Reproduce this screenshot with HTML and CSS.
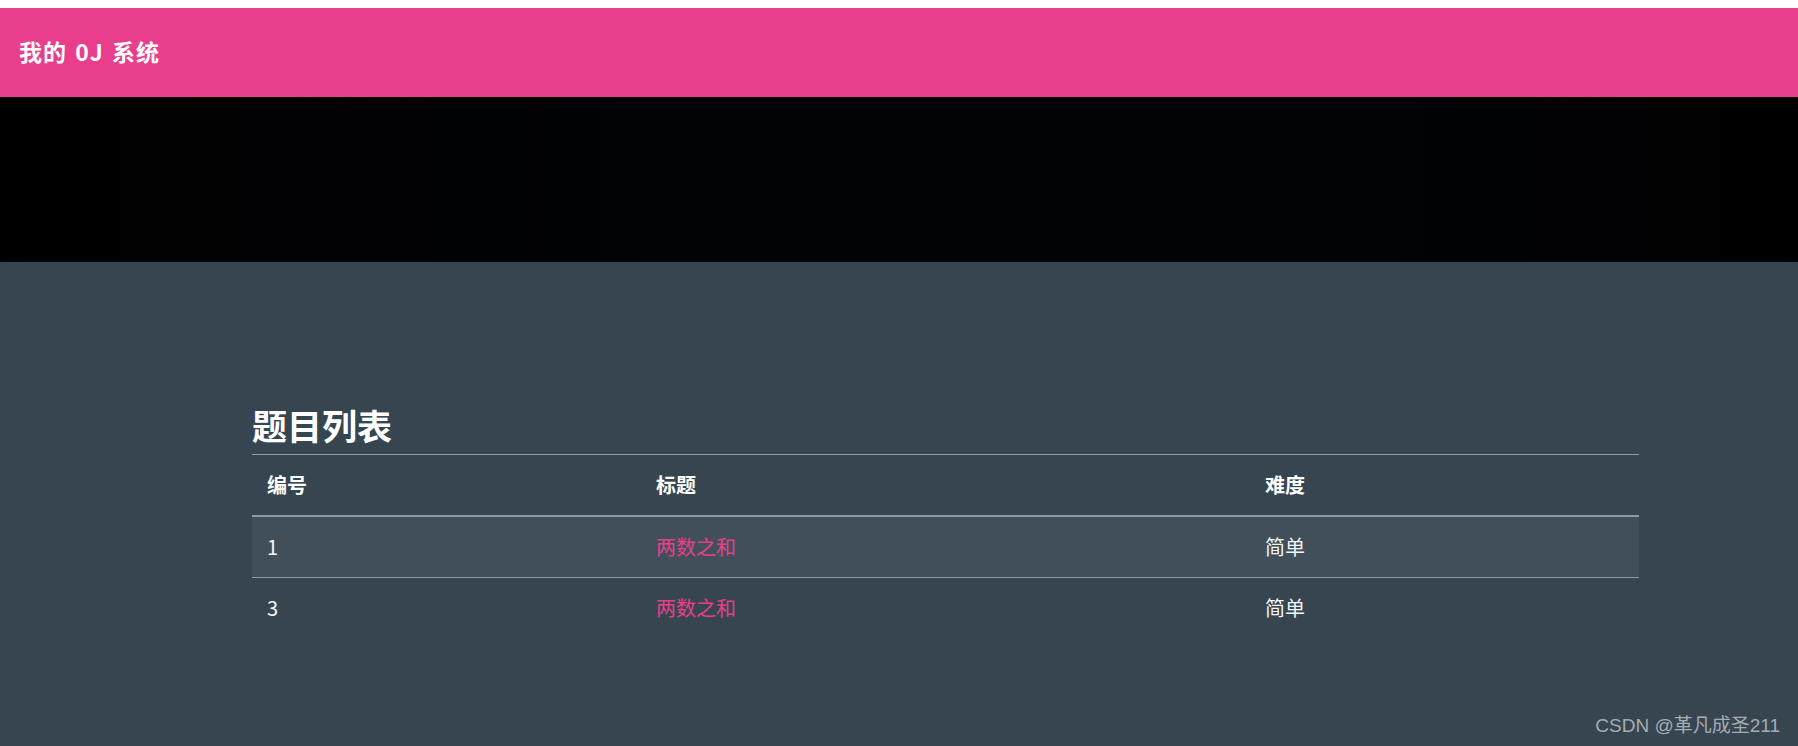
FILE: index.html
```html
<!DOCTYPE html>
<html lang="zh-CN">
<head>
<meta charset="utf-8">
<title>我的 OJ 系统</title>
<link rel="stylesheet" href="styles.css">
</head>
<body>
<div class="top-strip"></div>
<header class="navbar">
  <span class="brand">我的 0J 系统</span>
</header>
<div class="hero"></div>
<main class="page">
  <section class="container">
    <h2 class="title">题目列表</h2>
    <table class="problems">
      <colgroup>
        <col class="c-id">
        <col class="c-title">
        <col class="c-level">
      </colgroup>
      <thead>
        <tr><th>编号</th><th>标题</th><th>难度</th></tr>
      </thead>
      <tbody>
        <tr class="odd"><td>1</td><td><a class="link" href="#">两数之和</a></td><td>简单</td></tr>
        <tr><td>3</td><td><a class="link" href="#">两数之和</a></td><td>简单</td></tr>
      </tbody>
    </table>
  </section>
  <div class="watermark">CSDN @革凡成圣211</div>
</main>
</body>
</html>
```

FILE: styles.css
```css
html, body {
  margin: 0;
  padding: 0;
}
body {
  background: #374550;
  font-family: "Noto Sans CJK SC", "Noto Sans", sans-serif;
  color: #ffffff;
  height: 746px;
  overflow: hidden;
}
.top-strip {
  height: 8px;
  background: #ffffff;
}
.navbar {
  height: 89px;
  background: #e83e8c;
  display: flex;
  align-items: center;
  padding-left: 19px;
  padding-bottom: 4px;
  box-sizing: border-box;
}
.brand {
  font-size: 23px;
  font-weight: 700;
  color: #ffffff;
  letter-spacing: 1px;
  word-spacing: 2px;
}
.hero {
  height: 165px;
  background: linear-gradient(90deg, #000000 0%, #020307 40%, #020307 75%, #000000 100%);
}
.page {
  position: relative;
  height: 484px;
}
.container {
  margin-left: 252px;
  width: 1387px;
  padding-top: 138px;
}
.title {
  margin: 0 0 5px 0;
  font-size: 35px;
  line-height: 49px;
  font-weight: 700;
  color: #ffffff;
}
.problems {
  width: 100%;
  border-collapse: collapse;
  table-layout: fixed;
  border-top: 1px solid #8a9caa;
}
.c-id { width: 389px; }
.c-title { width: 609px; }
.c-level { width: 389px; }
.problems th,
.problems td {
  text-align: left;
  padding: 15px 15px;
  font-size: 20px;
  line-height: 30px;
}
.problems th {
  font-weight: 700;
  border-bottom: 2px solid #8a9caa;
}
.problems td {
  font-weight: 400;
  color: #f3f5f7;
}
.problems tr.odd td {
  background: #414f5a;
  border-bottom: 1px solid #8a9caa;
}
.link {
  color: #e83e8c;
  text-decoration: none;
}
.watermark {
  position: absolute;
  right: 18px;
  bottom: 9px;
  font-family: "Liberation Sans", "Noto Sans CJK SC", sans-serif;
  font-size: 19px;
  color: #a3acb3;
}
```
